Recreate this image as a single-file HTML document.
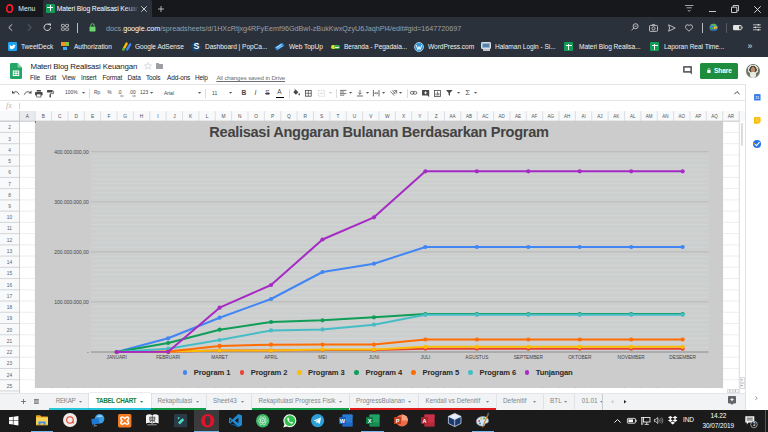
<!DOCTYPE html><html><head><meta charset="utf-8"><title>Materi Blog Realisasi Keuangan</title><style>
*{margin:0;padding:0;box-sizing:border-box}
html,body{width:768px;height:432px;overflow:hidden;background:#fff;font-family:"Liberation Sans",sans-serif}
.a{position:absolute}
.t{position:absolute;white-space:nowrap;line-height:1}
svg{position:absolute;overflow:visible}
</style></head><body>
<div class="a" style="left:0px;top:0px;width:768px;height:17px;background:#16181c;"></div>
<div class="a" style="left:0px;top:17px;width:768px;height:40px;background:#2a313a;"></div>
<div class="a" style="left:43px;top:0px;width:109px;height:17px;background:#2a313a;border-radius:1.5px 1.5px 0 0"></div>
<svg style="left:5.4px;top:4.1px" width="9.2" height="9.2" viewBox="0 0 18 18"><ellipse cx="9" cy="9" rx="5.6" ry="7.2" fill="none" stroke="#ff1b2d" stroke-width="3.2"/></svg>
<div class="t" style="left:18.3px;top:6.10px;font-size:6.8px;color:#e8e8e8;">Menu</div>
<div class="a" style="left:45.8px;top:3.9px;width:9px;height:9px;background:#0f9d58;border-radius:1px"></div>
<div class="a" style="left:47.3px;top:6.6px;width:6px;height:1.1px;background:#fff;"></div>
<div class="a" style="left:49.5px;top:5.2px;width:1.1px;height:6.2px;background:#fff;"></div>
<div class="t" style="left:56.8px;top:6.00px;font-size:6.8px;color:#fff;letter-spacing:-0.1px">Materi Blog Realisasi Keuar</div>
<div class="a" style="left:124px;top:3px;width:15px;height:12px;background:linear-gradient(90deg,rgba(42,49,58,0),rgba(42,49,58,0.95));"></div>
<svg style="left:141px;top:5.5px" width="6" height="6" viewBox="0 0 6 6"><path d="M0.3 0.3L5.7 5.7M5.7 0.3L0.3 5.7" stroke="#ddd" stroke-width="0.9"/></svg>
<svg style="left:158px;top:5.5px" width="6" height="6" viewBox="0 0 6 6"><path d="M3 0V6M0 3H6" stroke="#ddd" stroke-width="0.75"/></svg>
<svg style="left:685.2px;top:5px" width="8.4" height="7" viewBox="0 0 8.4 7"><path d="M0 0.5H8.4M1.6 2.8H6.8" stroke="#c8c8c8" stroke-width="0.8"/><path d="M2.8 5L4.2 6.4L5.6 5" stroke="#c8c8c8" stroke-width="0.8" fill="none"/></svg>
<div class="a" style="left:709.3px;top:11px;width:6.4px;height:0.8px;background:#c8c8c8;"></div>
<svg style="left:731px;top:5px" width="8" height="8" viewBox="0 0 8 8"><path d="M0.5 2.2H5.8V7.5H0.5Z M2.2 2.2V0.5H7.5V5.8H5.8" stroke="#ddd" stroke-width="0.9" fill="none"/></svg>
<svg style="left:753.5px;top:5.5px" width="7" height="7" viewBox="0 0 7 7"><path d="M0.3 0.3L6.7 6.7M6.7 0.3L0.3 6.7" stroke="#eee" stroke-width="0.9"/></svg>
<svg style="left:8px;top:23.5px" width="5" height="7" viewBox="0 0 5 7"><path d="M4.2 0.3L0.8 3.5L4.2 6.7" stroke="#ddd" stroke-width="0.9" fill="none"/></svg>
<svg style="left:26.5px;top:23.5px" width="5" height="7" viewBox="0 0 5 7"><path d="M0.8 0.3L4.2 3.5L0.8 6.7" stroke="#6a6f77" stroke-width="0.9" fill="none"/></svg>
<svg style="left:42.8px;top:23.2px" width="8.6" height="8.6" viewBox="0 0 8 8"><path d="M7 4A3 3 0 1 1 5.8 1.6" stroke="#ddd" stroke-width="0.9" fill="none"/><path d="M5 0.2L7.6 0.6L7 3Z" fill="#ddd"/></svg>
<svg style="left:61px;top:24px" width="8" height="7" viewBox="0 0 8 7"><g stroke="#ddd" stroke-width="0.7" fill="none"><rect x="0.4" y="0.4" width="3" height="2.4" rx="0.6"/><rect x="4.6" y="0.4" width="3" height="2.4" rx="0.6"/><rect x="0.4" y="4" width="3" height="2.4" rx="0.6"/><rect x="4.6" y="4" width="3" height="2.4" rx="0.6"/></g></svg>
<div class="a" style="left:77px;top:23px;width:0.8px;height:9.5px;background:#b8bcc2;"></div>
<svg style="left:88.5px;top:23px" width="7" height="9" viewBox="0 0 7 9"><path d="M1.8 4V2.4A1.7 1.7 0 0 1 5.2 2.4V4" stroke="#6fd66f" stroke-width="0.9" fill="none"/><rect x="0.5" y="3.8" width="6" height="4.6" rx="0.6" fill="#6fd66f"/></svg>
<div class="t" style="left:106px;top:24.7px;font-size:7.2px;color:#9aa0a8;letter-spacing:-0.01px">docs.<span style="color:#fff">google.com</span>/spreadsheets/d/1HXcRtjxg4RFyEemf96GdBwI-zBukKwxQzyU6JaqhPl4/edit#gid=1647720697</div>
<svg style="left:631px;top:23px" width="8" height="8" viewBox="0 0 8 8"><circle cx="4.6" cy="3.2" r="2.5" stroke="#ddd" stroke-width="0.8" fill="none"/><path d="M2.8 5L0.5 7.4M3.6 3.2H5.6" stroke="#ddd" stroke-width="0.8"/></svg>
<svg style="left:649px;top:23.5px" width="9" height="8" viewBox="0 0 9 8"><rect x="0.5" y="1.4" width="8" height="6" rx="1" stroke="#ddd" stroke-width="0.8" fill="none"/><circle cx="4.5" cy="4.4" r="1.6" stroke="#ddd" stroke-width="0.8" fill="none"/><path d="M3 1.4L3.6 0.4H5.4L6 1.4" stroke="#ddd" stroke-width="0.7" fill="none"/></svg>
<svg style="left:667.5px;top:23.5px" width="8" height="8" viewBox="0 0 8 8"><path d="M0.6 0.8L7.2 4L0.6 7.2L1.6 4Z" stroke="#ddd" stroke-width="0.8" fill="none" stroke-linejoin="round"/></svg>
<svg style="left:685px;top:23.5px" width="8" height="8" viewBox="0 0 8 8"><path d="M4 7.2C1.5 5.2 0.5 4 0.5 2.6A1.9 1.9 0 0 1 4 1.7A1.9 1.9 0 0 1 7.5 2.6C7.5 4 6.5 5.2 4 7.2Z" stroke="#ddd" stroke-width="0.8" fill="none"/></svg>
<div class="a" style="left:701.5px;top:23px;width:0.8px;height:9.5px;background:#b8bcc2;"></div>
<svg style="left:708.6px;top:23.4px" width="9" height="8.4" viewBox="0 0 9 8.4"><ellipse cx="4.6" cy="4.4" rx="4" ry="3.6" fill="#3a7bd5"/><path d="M1 3C2 1 4 0.4 6 1L7.6 2.4L5.4 3.2L3.6 2.6Z" fill="#58b947"/><path d="M5.2 3.6L8.4 3.4L8.2 5.4L6 6.6L4.6 5.4Z" fill="#f2c230"/><path d="M0.6 4.6L3 4.2L4.4 5.8L3.4 7.6C1.8 7.2 0.8 6 0.6 4.6Z" fill="#58b947"/><path d="M1.6 5.2L4.5 7.8L7.4 5.2" stroke="#1f4f9a" stroke-width="1" fill="none"/></svg>
<div class="a" style="left:725.5px;top:23px;width:0.8px;height:9.5px;background:#555b63;"></div>
<svg style="left:733px;top:25px" width="9.6" height="5.2" viewBox="0 0 9.6 5.2"><rect x="0" y="0" width="8.6" height="5.2" rx="1.3" fill="#e4e4e4"/><rect x="6.2" y="1" width="1.6" height="3.2" rx="0.5" fill="#2a313a"/><rect x="8.9" y="1.6" width="0.7" height="2" fill="#e4e4e4"/></svg>
<svg style="left:752.6px;top:24.3px" width="7.8" height="6.6" viewBox="0 0 7.8 6.6"><path d="M0 0.8H7.8M0 3.3H7.8M0 5.8H7.8" stroke="#ddd" stroke-width="0.75"/><circle cx="5.4" cy="0.8" r="0.9" fill="#ddd"/><circle cx="2.4" cy="3.3" r="0.9" fill="#ddd"/><circle cx="5.4" cy="5.8" r="0.9" fill="#ddd"/></svg>
<div class="a" style="left:7px;top:41.6px;width:9.4px;height:8.6px;margin:0.7px 0 0 0.6px;background:#1da1f2;border-radius:1px"></div><svg style="left:8.5px;top:43.6px" width="7" height="6" viewBox="0 0 7 6"><path d="M0.3 4.8C2.6 6 6 5 6 1.8L6.8 1L5.9 1.1A1.4 1.4 0 0 0 3.5 2.2C2.3 2.2 1.3 1.5 0.7 0.8C0.3 1.6 0.6 2.5 1.2 3L0.5 2.9C0.6 3.6 1.1 4.1 1.8 4.3C1.4 4.6 0.9 4.8 0.3 4.8Z" fill="#fff"/></svg>
<div class="t" style="left:21px;top:44.30px;font-size:6.6px;color:#f0f0f0;letter-spacing:-0.05px">TweetDeck</div>
<div class="a" style="left:61px;top:42.300000000000004px;width:3.6px;height:3.6px;background:#f7931e"></div><div class="a" style="left:65.4px;top:42.300000000000004px;width:3.6px;height:3.6px;background:#7ac943"></div><div class="a" style="left:63.2px;top:46.800000000000004px;width:3.6px;height:3.6px;background:#3fa9f5"></div>
<div class="t" style="left:74px;top:44.30px;font-size:6.6px;color:#f0f0f0;letter-spacing:-0.05px">Authorization</div>
<svg style="left:122px;top:42.1px" width="10" height="9" viewBox="0 0 10 9"><path d="M1.4 7.5L4.6 1.6" stroke="#fbbc04" stroke-width="2.4" stroke-linecap="round"/><path d="M5.2 7.5L8.2 2.4" stroke="#4285f4" stroke-width="2.4" stroke-linecap="round"/><circle cx="1.6" cy="7.3" r="1.4" fill="#34a853"/></svg>
<div class="t" style="left:135px;top:44.30px;font-size:6.6px;color:#f0f0f0;letter-spacing:-0.05px">Google AdSense</div>
<div class="a" style="left:191px;top:41.6px;width:10px;height:10px;background:#17406b;border-radius:5px"></div><div class="t" style="left:193.5px;top:42.2px;font-size:8.8px;font-weight:bold;color:#fff">S</div>
<div class="t" style="left:205px;top:44.30px;font-size:6.6px;color:#f0f0f0;letter-spacing:-0.05px">Dashboard | PopCa...</div>
<svg style="left:274px;top:42.1px" width="11" height="9" viewBox="0 0 11 9"><path d="M0.5 5.5L8 0.8L10.5 3.8L3 8.4Z" fill="#2b8be0"/><path d="M2.4 5.6L7.6 2.4" stroke="#fff" stroke-width="0.9"/><path d="M3.6 6.8L8.6 3.8" stroke="#bfe0ff" stroke-width="0.7"/></svg>
<div class="t" style="left:289px;top:44.30px;font-size:6.6px;color:#f0f0f0;letter-spacing:-0.05px">Web TopUp</div>
<div class="a" style="left:331px;top:44.1px;width:9.4px;height:4.4px;margin-top:0.6px;background:linear-gradient(90deg,#e6e21f 0 30%,#35b44a 45%);border-radius:2.2px"></div><div class="a" style="left:334.5px;top:46.5px;width:4px;height:1px;background:#e4f7e8"></div>
<div class="t" style="left:344px;top:44.30px;font-size:6.6px;color:#f0f0f0;letter-spacing:-0.05px">Beranda - Pegadaia...</div>
<svg style="left:414px;top:41.6px" width="10" height="10" viewBox="0 0 10 10"><circle cx="5" cy="5" r="4.5" fill="#2b93d6" stroke="#cfe8f7" stroke-width="0.7"/><path d="M2.3 3.2L3.9 7.6L5 4.6L6.1 7.6L7.7 3.2" stroke="#fff" stroke-width="1" fill="none"/></svg>
<div class="t" style="left:428px;top:44.30px;font-size:6.6px;color:#f0f0f0;letter-spacing:-0.05px">WordPress.com</div>
<div class="a" style="left:481px;top:42.1px;width:10px;height:7px;background:#8fb6d8;border:0.9px solid #d8dde2;border-radius:1px"></div><div class="a" style="left:482.5px;top:49.4px;width:7px;height:1.6px;background:#c0c4c9"></div><div class="a" style="left:483px;top:44.0px;width:6px;height:2.6px;background:#5a7fa3"></div>
<div class="t" style="left:495px;top:44.30px;font-size:6.6px;color:#f0f0f0;letter-spacing:-0.05px">Halaman Login - Si...</div>
<div class="a" style="left:564.2px;top:42.4px;width:8.8px;height:8.6px;background:#0f9d58;border-radius:0.8px"></div><div class="a" style="left:565.6px;top:45.2px;width:6px;height:1.1px;background:#fff"></div><div class="a" style="left:567.8px;top:43.800000000000004px;width:1.1px;height:6px;background:#fff"></div>
<div class="t" style="left:579px;top:44.30px;font-size:6.6px;color:#f0f0f0;letter-spacing:-0.05px">Materi Blog Realisa...</div>
<div class="a" style="left:650.2px;top:42.4px;width:8.8px;height:8.6px;background:#0f9d58;border-radius:0.8px"></div><div class="a" style="left:651.6px;top:45.2px;width:6px;height:1.1px;background:#fff"></div><div class="a" style="left:653.8px;top:43.800000000000004px;width:1.1px;height:6px;background:#fff"></div>
<div class="t" style="left:664px;top:44.30px;font-size:6.6px;color:#f0f0f0;letter-spacing:-0.05px">Laporan Real Time...</div>
<div class="t" style="left:747.5px;top:42.05px;font-size:8.5px;color:#e0e0e0;">»</div>
<!--CHROME-END-->
<div class="a" style="left:0px;top:57px;width:768px;height:27px;background:#fff;"></div>
<svg style="left:9.5px;top:63px" width="12" height="16" viewBox="0 0 12 16"><path d="M1.2 0H7.6L12 4.4V14.8A1.2 1.2 0 0 1 10.8 16H1.2A1.2 1.2 0 0 1 0 14.8V1.2A1.2 1.2 0 0 1 1.2 0Z" fill="#23a566"/><path d="M7.6 0L12 4.4H8.6A1 1 0 0 1 7.6 3.4Z" fill="#8ed1b1"/><path d="M2.8 7.6H9.2V13H2.8ZM3.8 8.6V9.8H5.5V8.6ZM6.5 8.6V9.8H8.2V8.6ZM3.8 10.8V12H5.5V10.8ZM6.5 10.8V12H8.2V10.8Z" fill="#fff" fill-rule="evenodd"/></svg>
<div class="t" style="left:30.5px;top:62.65px;font-size:7.9px;color:#222;letter-spacing:-0.19px">Materi Blog Realisasi Keuangan</div>
<svg style="left:143.5px;top:62px" width="8" height="8" viewBox="0 0 8 8"><path d="M4 0.6L5 3H7.6L5.5 4.6L6.3 7.2L4 5.6L1.7 7.2L2.5 4.6L0.4 3H3Z" stroke="#c4c7ca" stroke-width="0.6" fill="none"/></svg>
<svg style="left:156px;top:63px" width="7" height="6" viewBox="0 0 7 6"><path d="M0 0.6A0.6 0.6 0 0 1 0.6 0H2.6L3.4 0.9H6.4A0.6 0.6 0 0 1 7 1.5V5.4A0.6 0.6 0 0 1 6.4 6H0.6A0.6 0.6 0 0 1 0 5.4Z" fill="#9b9fa3"/></svg>
<div class="t" style="left:30px;top:74.55px;font-size:6.5px;color:#222;letter-spacing:-0.14px">File</div>
<div class="t" style="left:45.5px;top:74.55px;font-size:6.5px;color:#222;letter-spacing:-0.14px">Edit</div>
<div class="t" style="left:62px;top:74.55px;font-size:6.5px;color:#222;letter-spacing:-0.14px">View</div>
<div class="t" style="left:81px;top:74.55px;font-size:6.5px;color:#222;letter-spacing:-0.14px">Insert</div>
<div class="t" style="left:102.5px;top:74.55px;font-size:6.5px;color:#222;letter-spacing:-0.14px">Format</div>
<div class="t" style="left:127.5px;top:74.55px;font-size:6.5px;color:#222;letter-spacing:-0.14px">Data</div>
<div class="t" style="left:146px;top:74.55px;font-size:6.5px;color:#222;letter-spacing:-0.14px">Tools</div>
<div class="t" style="left:167px;top:74.55px;font-size:6.5px;color:#222;letter-spacing:-0.14px">Add-ons</div>
<div class="t" style="left:195px;top:74.55px;font-size:6.5px;color:#222;letter-spacing:-0.14px">Help</div>
<div class="t" style="left:216.4px;top:74.85px;font-size:6.1px;color:#6a6e73;text-decoration:underline;letter-spacing:-0.12px">All changes saved in Drive</div>
<svg style="left:683px;top:66px" width="9" height="9" viewBox="0 0 9 9"><path d="M0 0.8A0.8 0.8 0 0 1 0.8 0H8.2A0.8 0.8 0 0 1 9 0.8V8.6L7 6.8H0.8A0.8 0.8 0 0 1 0 6ZM1.7 1.7V5.1H7.3V1.7Z" fill="#5f6368" fill-rule="evenodd"/></svg>
<div class="a" style="left:700.3px;top:63.3px;width:37.4px;height:15.4px;background:#1e8e3e;border-radius:1.6px"></div>
<svg style="left:706.5px;top:68.2px" width="3.8" height="5.3" viewBox="0 0 5 7"><path d="M1.2 3V1.9A1.3 1.3 0 0 1 3.8 1.9V3" stroke="#fff" stroke-width="0.8" fill="none"/><rect x="0.3" y="2.8" width="4.4" height="3.8" rx="0.5" fill="#fff"/></svg>
<div class="t" style="left:714px;top:67.50px;font-size:6.6px;color:#fff;font-weight:bold;letter-spacing:-0.1px">Share</div>
<div class="a" style="left:745.8px;top:63.7px;width:14px;height:14px;border-radius:7px;background:radial-gradient(circle at 50% 40%,#b98a6a 0 2.4px,#5a4a3c 2.5px 3.6px,#d9dad6 3.7px 5px,#6d7a63 5.1px 7px)"></div>
<div class="a" style="left:749.5px;top:71.5px;width:6.6px;height:6px;border-radius:2px 2px 3px 3px;background:#e9e9e6"></div>
<div class="a" style="left:0px;top:83.6px;width:745px;height:0.8px;background:#e3e5e8;"></div>
<div class="a" style="left:0px;top:100px;width:745px;height:0.9px;background:#e3e5e8;"></div>
<div class="a" style="left:0px;top:110.6px;width:745px;height:0.8px;background:#dcdee1;"></div>
<svg style="left:12px;top:90px" width="7.5" height="6" viewBox="0 0 7.5 6"><path d="M1.6 2.6C3.4 1 6 1.6 7 4.6" stroke="#484848" stroke-width="0.95" fill="none"/><path d="M0 0.6V3.6H3Z" fill="#484848"/></svg>
<svg style="left:23.5px;top:90px" width="7.5" height="6" viewBox="0 0 7.5 6"><path d="M5.9 2.6C4.1 1 1.5 1.6 0.5 4.6" stroke="#484848" stroke-width="0.95" fill="none"/><path d="M7.5 0.6V3.6H4.5Z" fill="#484848"/></svg>
<svg style="left:34.8px;top:89.6px" width="7.6" height="7" viewBox="0 0 7.6 7"><rect x="1.7" y="0" width="4.2" height="1.6" fill="#484848"/><rect x="0" y="2" width="7.6" height="3.4" rx="0.7" fill="#484848"/><rect x="1.7" y="4" width="4.2" height="3" fill="#fff" stroke="#484848" stroke-width="0.7"/></svg>
<svg style="left:47.2px;top:89.5px" width="7" height="7.4" viewBox="0 0 7 7.4"><rect x="0" y="0" width="5.6" height="2.4" rx="0.4" fill="#484848"/><path d="M5.6 1.2H6.6V3.6H3.2V4.6" stroke="#484848" stroke-width="0.7" fill="none"/><rect x="2.5" y="4.4" width="1.5" height="3" fill="#484848"/></svg>
<div class="t" style="left:65px;top:90.95px;font-size:4.9px;color:#444;">100%</div>
<svg style="left:82.4px;top:92.4px" width="3.2" height="1.8" viewBox="0 0 3.2 1.8"><path d="M0 0H3.2L1.6 1.8Z" fill="#555"/></svg>
<div class="a" style="left:89.2px;top:88.5px;width:0.7px;height:9.5px;background:#dadce0;"></div>
<div class="t" style="left:94px;top:90.95px;font-size:4.9px;color:#444;">Rp</div>
<div class="t" style="left:107.2px;top:90.95px;font-size:4.9px;color:#444;">%</div>
<div class="t" style="left:117.5px;top:90.95px;font-size:4.9px;color:#444;">.0</div>
<svg style="left:119.5px;top:95.3px" width="4" height="2" viewBox="0 0 4 2"><path d="M4 1H0.8M1.6 0.1L0.6 1L1.6 1.9" stroke="#484848" stroke-width="0.5" fill="none"/></svg>
<div class="t" style="left:128.8px;top:90.95px;font-size:4.9px;color:#444;">.00</div>
<svg style="left:132px;top:95.3px" width="4" height="2" viewBox="0 0 4 2"><path d="M0 1H3.2M2.4 0.1L3.4 1L2.4 1.9" stroke="#484848" stroke-width="0.5" fill="none"/></svg>
<div class="t" style="left:140px;top:90.95px;font-size:4.9px;color:#444;">123</div>
<svg style="left:149.9px;top:92.4px" width="3.2" height="1.8" viewBox="0 0 3.2 1.8"><path d="M0 0H3.2L1.6 1.8Z" fill="#555"/></svg>
<div class="t" style="left:164px;top:90.90px;font-size:5.0px;color:#444;">Arial</div>
<svg style="left:197.9px;top:92.4px" width="3.2" height="1.8" viewBox="0 0 3.2 1.8"><path d="M0 0H3.2L1.6 1.8Z" fill="#555"/></svg>
<div class="a" style="left:204.7px;top:88.5px;width:0.7px;height:9.5px;background:#dadce0;"></div>
<div class="t" style="left:212px;top:90.90px;font-size:5.0px;color:#444;">11</div>
<svg style="left:229.4px;top:92.4px" width="3.2" height="1.8" viewBox="0 0 3.2 1.8"><path d="M0 0H3.2L1.6 1.8Z" fill="#555"/></svg>
<div class="t" style="left:241.5px;top:89.70px;font-size:6.6px;color:#444;font-weight:bold">B</div>
<div class="t" style="left:254.6px;top:89.60px;font-size:6.8px;color:#444;font-style:italic">I</div>
<div class="t" style="left:265.2px;top:89.70px;font-size:6.6px;color:#444;text-decoration:line-through">S</div>
<div class="t" style="left:277.3px;top:89.20px;font-size:6.4px;color:#444;">A</div>
<div class="a" style="left:275.5px;top:96.5px;width:8.5px;height:1.3px;background:#000;"></div>
<div class="a" style="left:288.7px;top:88.5px;width:0.7px;height:9.5px;background:#dadce0;"></div>
<svg style="left:292.8px;top:89.4px" width="7" height="7" viewBox="0 0 7 7"><path d="M2.6 0.4L5.4 3.2L2.9 5.7L0.3 3.2Z" fill="#484848"/><path d="M1.4 0L2.8 1.2" stroke="#484848" stroke-width="0.6"/><path d="M6.2 3.8C6.8 4.8 7 5.2 7 5.6A0.8 0.8 0 0 1 5.4 5.6C5.4 5.2 5.6 4.8 6.2 3.8Z" fill="#484848"/></svg>
<svg style="left:305.2px;top:89.7px" width="6.6" height="6.6" viewBox="0 0 6.6 6.6"><rect x="0.4" y="0.4" width="5.8" height="5.8" fill="none" stroke="#484848" stroke-width="0.8"/><path d="M3.3 0.4V6.2M0.4 3.3H6.2" stroke="#484848" stroke-width="0.7"/></svg>
<svg style="left:317.6px;top:89.7px" width="7" height="6.6" viewBox="0 0 7 6.6"><rect x="0.4" y="0.4" width="6.2" height="5.8" fill="none" stroke="#c6c9cc" stroke-width="0.8" stroke-dasharray="1.4 0.9"/><path d="M1.6 3.3H5.4" stroke="#c6c9cc" stroke-width="0.7"/></svg>
<svg style="left:329.4px;top:92.4px" width="3.2" height="1.8" viewBox="0 0 3.2 1.8"><path d="M0 0H3.2L1.6 1.8Z" fill="#c6c9cc"/></svg>
<div class="a" style="left:336.2px;top:88.5px;width:0.7px;height:9.5px;background:#dadce0;"></div>
<svg style="left:340px;top:90.2px" width="6.4" height="5.6" viewBox="0 0 6.4 5.6"><path d="M0 0.4H6.4M0 2H4.2M0 3.6H6.4M0 5.2H4.2" stroke="#484848" stroke-width="0.75"/></svg>
<svg style="left:349.4px;top:92.4px" width="3.2" height="1.8" viewBox="0 0 3.2 1.8"><path d="M0 0H3.2L1.6 1.8Z" fill="#555"/></svg>
<svg style="left:357px;top:89.8px" width="6" height="6.6" viewBox="0 0 6 6.6"><path d="M3 0V4.2M1.4 2.8L3 4.4L4.6 2.8" stroke="#484848" stroke-width="0.75" fill="none"/><path d="M0 6H6" stroke="#484848" stroke-width="0.8"/></svg>
<svg style="left:366.4px;top:92.4px" width="3.2" height="1.8" viewBox="0 0 3.2 1.8"><path d="M0 0H3.2L1.6 1.8Z" fill="#555"/></svg>
<svg style="left:373px;top:89.8px" width="6.4" height="6.4" viewBox="0 0 6.4 6.4"><path d="M0.4 0V6.4M6 0V6.4" stroke="#484848" stroke-width="0.8"/><path d="M1.6 3.2H4.8M2.6 2.2L1.6 3.2L2.6 4.2M3.8 2.2L4.8 3.2L3.8 4.2" stroke="#484848" stroke-width="0.6" fill="none"/></svg>
<svg style="left:382.4px;top:92.4px" width="3.2" height="1.8" viewBox="0 0 3.2 1.8"><path d="M0 0H3.2L1.6 1.8Z" fill="#555"/></svg>
<svg style="left:390px;top:89.8px" width="7" height="6.4" viewBox="0 0 7 6.4"><path d="M0.4 1.4L4.2 5.6M2.2 0.4L5.6 4.2" stroke="#484848" stroke-width="0.7"/><path d="M3.6 0.6H6.6V3.4" stroke="#484848" stroke-width="0.7" fill="none"/><path d="M6.6 0.6L3.6 3.8" stroke="#484848" stroke-width="0.7"/></svg>
<svg style="left:398.9px;top:92.4px" width="3.2" height="1.8" viewBox="0 0 3.2 1.8"><path d="M0 0H3.2L1.6 1.8Z" fill="#555"/></svg>
<div class="a" style="left:406.7px;top:88.5px;width:0.7px;height:9.5px;background:#dadce0;"></div>
<svg style="left:410px;top:91.2px" width="7.2" height="3.6" viewBox="0 0 7.2 3.6"><rect x="0.4" y="0.4" width="3.6" height="2.8" rx="1.4" fill="none" stroke="#484848" stroke-width="0.8"/><rect x="3.2" y="0.4" width="3.6" height="2.8" rx="1.4" fill="none" stroke="#484848" stroke-width="0.8"/></svg>
<svg style="left:422px;top:89.6px" width="7.2" height="7.2" viewBox="0 0 7.2 7.2"><path d="M0 0.6A0.6 0.6 0 0 1 0.6 0H6.6A0.6 0.6 0 0 1 7.2 0.6V7.2L5.6 5.6H0.6A0.6 0.6 0 0 1 0 5Z" fill="#484848"/><path d="M3.6 1.2V4.4M2 2.8H5.2" stroke="#fff" stroke-width="0.8"/></svg>
<svg style="left:433.6px;top:89.6px" width="6.8" height="6.8" viewBox="0 0 6.8 6.8"><rect x="0.4" y="0.4" width="6" height="6" fill="none" stroke="#484848" stroke-width="0.8"/><path d="M2 5.4V3.6M3.4 5.4V1.6M4.8 5.4V3" stroke="#484848" stroke-width="0.8"/></svg>
<svg style="left:446.2px;top:90.2px" width="6.6" height="5.8" viewBox="0 0 6.6 5.8"><path d="M0 0H6.6L4 3V5.8L2.6 5V3Z" fill="#484848"/></svg>
<svg style="left:457.4px;top:92.4px" width="3.2" height="1.8" viewBox="0 0 3.2 1.8"><path d="M0 0H3.2L1.6 1.8Z" fill="#555"/></svg>
<div class="t" style="left:465.2px;top:88.80px;font-size:8px;color:#555;">Σ</div>
<svg style="left:473.9px;top:92.4px" width="3.2" height="1.8" viewBox="0 0 3.2 1.8"><path d="M0 0H3.2L1.6 1.8Z" fill="#555"/></svg>
<svg style="left:733.6px;top:91.4px" width="6" height="3.6" viewBox="0 0 6 3.6"><path d="M0.4 3.2L3 0.6L5.6 3.2" stroke="#444" stroke-width="1" fill="none"/></svg>
<div class="t" style="left:6px;top:101.9px;font-size:8px;color:#b5b8bc;font-style:italic;font-family:'Liberation Serif',serif">fx</div>
<div class="a" style="left:19.3px;top:102.5px;width:0.7px;height:6px;background:#d5d7da;"></div>
<!--TOOLBAR-END-->
<div class="a" style="left:0px;top:111.2px;width:739px;height:10px;background:#f8f9fa;"></div>
<div class="a" style="left:0px;top:121.2px;width:19.5px;height:272.1px;background:#f8f9fa;"></div>
<div class="a" style="left:19.5px;top:111.2px;width:15.700000000000003px;height:10px;background:#e8eaed;"></div>
<div class="t" style="left:27.35px;top:115.00px;font-size:4.8px;color:#4f5358;transform:translateX(-50%);">A</div>
<div class="t" style="left:43.385000000000005px;top:115.00px;font-size:4.8px;color:#4f5358;transform:translateX(-50%);">B</div>
<div class="t" style="left:59.755px;top:115.00px;font-size:4.8px;color:#4f5358;transform:translateX(-50%);">C</div>
<div class="t" style="left:76.125px;top:115.00px;font-size:4.8px;color:#4f5358;transform:translateX(-50%);">D</div>
<div class="t" style="left:92.495px;top:115.00px;font-size:4.8px;color:#4f5358;transform:translateX(-50%);">E</div>
<div class="t" style="left:108.86500000000001px;top:115.00px;font-size:4.8px;color:#4f5358;transform:translateX(-50%);">F</div>
<div class="t" style="left:125.23500000000001px;top:115.00px;font-size:4.8px;color:#4f5358;transform:translateX(-50%);">G</div>
<div class="t" style="left:141.60500000000002px;top:115.00px;font-size:4.8px;color:#4f5358;transform:translateX(-50%);">H</div>
<div class="t" style="left:157.97500000000002px;top:115.00px;font-size:4.8px;color:#4f5358;transform:translateX(-50%);">I</div>
<div class="t" style="left:174.34500000000003px;top:115.00px;font-size:4.8px;color:#4f5358;transform:translateX(-50%);">J</div>
<div class="t" style="left:190.71500000000003px;top:115.00px;font-size:4.8px;color:#4f5358;transform:translateX(-50%);">K</div>
<div class="t" style="left:207.08500000000004px;top:115.00px;font-size:4.8px;color:#4f5358;transform:translateX(-50%);">L</div>
<div class="t" style="left:223.455px;top:115.00px;font-size:4.8px;color:#4f5358;transform:translateX(-50%);">M</div>
<div class="t" style="left:239.825px;top:115.00px;font-size:4.8px;color:#4f5358;transform:translateX(-50%);">N</div>
<div class="t" style="left:256.195px;top:115.00px;font-size:4.8px;color:#4f5358;transform:translateX(-50%);">O</div>
<div class="t" style="left:272.565px;top:115.00px;font-size:4.8px;color:#4f5358;transform:translateX(-50%);">P</div>
<div class="t" style="left:288.935px;top:115.00px;font-size:4.8px;color:#4f5358;transform:translateX(-50%);">Q</div>
<div class="t" style="left:305.305px;top:115.00px;font-size:4.8px;color:#4f5358;transform:translateX(-50%);">R</div>
<div class="t" style="left:321.675px;top:115.00px;font-size:4.8px;color:#4f5358;transform:translateX(-50%);">S</div>
<div class="t" style="left:338.045px;top:115.00px;font-size:4.8px;color:#4f5358;transform:translateX(-50%);">T</div>
<div class="t" style="left:354.415px;top:115.00px;font-size:4.8px;color:#4f5358;transform:translateX(-50%);">U</div>
<div class="t" style="left:370.785px;top:115.00px;font-size:4.8px;color:#4f5358;transform:translateX(-50%);">V</div>
<div class="t" style="left:387.15500000000003px;top:115.00px;font-size:4.8px;color:#4f5358;transform:translateX(-50%);">W</div>
<div class="t" style="left:403.52500000000003px;top:115.00px;font-size:4.8px;color:#4f5358;transform:translateX(-50%);">X</div>
<div class="t" style="left:419.895px;top:115.00px;font-size:4.8px;color:#4f5358;transform:translateX(-50%);">Y</div>
<div class="t" style="left:436.265px;top:115.00px;font-size:4.8px;color:#4f5358;transform:translateX(-50%);">Z</div>
<div class="t" style="left:452.635px;top:115.15px;font-size:4.5px;color:#4f5358;transform:translateX(-50%);">AA</div>
<div class="t" style="left:469.005px;top:115.15px;font-size:4.5px;color:#4f5358;transform:translateX(-50%);">AB</div>
<div class="t" style="left:485.375px;top:115.15px;font-size:4.5px;color:#4f5358;transform:translateX(-50%);">AC</div>
<div class="t" style="left:501.745px;top:115.15px;font-size:4.5px;color:#4f5358;transform:translateX(-50%);">AD</div>
<div class="t" style="left:518.115px;top:115.15px;font-size:4.5px;color:#4f5358;transform:translateX(-50%);">AE</div>
<div class="t" style="left:534.4850000000001px;top:115.15px;font-size:4.5px;color:#4f5358;transform:translateX(-50%);">AF</div>
<div class="t" style="left:550.855px;top:115.15px;font-size:4.5px;color:#4f5358;transform:translateX(-50%);">AG</div>
<div class="t" style="left:567.2250000000001px;top:115.15px;font-size:4.5px;color:#4f5358;transform:translateX(-50%);">AH</div>
<div class="t" style="left:583.595px;top:115.15px;font-size:4.5px;color:#4f5358;transform:translateX(-50%);">AI</div>
<div class="t" style="left:599.9650000000001px;top:115.15px;font-size:4.5px;color:#4f5358;transform:translateX(-50%);">AJ</div>
<div class="t" style="left:616.335px;top:115.15px;font-size:4.5px;color:#4f5358;transform:translateX(-50%);">AK</div>
<div class="t" style="left:632.7050000000002px;top:115.15px;font-size:4.5px;color:#4f5358;transform:translateX(-50%);">AL</div>
<div class="t" style="left:649.075px;top:115.15px;font-size:4.5px;color:#4f5358;transform:translateX(-50%);">AM</div>
<div class="t" style="left:665.4450000000002px;top:115.15px;font-size:4.5px;color:#4f5358;transform:translateX(-50%);">AN</div>
<div class="t" style="left:681.815px;top:115.15px;font-size:4.5px;color:#4f5358;transform:translateX(-50%);">AO</div>
<div class="t" style="left:698.1850000000002px;top:115.15px;font-size:4.5px;color:#4f5358;transform:translateX(-50%);">AP</div>
<div class="t" style="left:714.5550000000001px;top:115.15px;font-size:4.5px;color:#4f5358;transform:translateX(-50%);">AQ</div>
<div class="t" style="left:730.9250000000002px;top:115.15px;font-size:4.5px;color:#4f5358;transform:translateX(-50%);">AR</div>
<svg style="left:0;top:0" width="768" height="432" viewBox="0 0 768 432"><path d="M19.50 111.2V121.2M35.20 111.2V121.2M51.57 111.2V121.2M67.94 111.2V121.2M84.31 111.2V121.2M100.68 111.2V121.2M117.05 111.2V121.2M133.42 111.2V121.2M149.79 111.2V121.2M166.16 111.2V121.2M182.53 111.2V121.2M198.90 111.2V121.2M215.27 111.2V121.2M231.64 111.2V121.2M248.01 111.2V121.2M264.38 111.2V121.2M280.75 111.2V121.2M297.12 111.2V121.2M313.49 111.2V121.2M329.86 111.2V121.2M346.23 111.2V121.2M362.60 111.2V121.2M378.97 111.2V121.2M395.34 111.2V121.2M411.71 111.2V121.2M428.08 111.2V121.2M444.45 111.2V121.2M460.82 111.2V121.2M477.19 111.2V121.2M493.56 111.2V121.2M509.93 111.2V121.2M526.30 111.2V121.2M542.67 111.2V121.2M559.04 111.2V121.2M575.41 111.2V121.2M591.78 111.2V121.2M608.15 111.2V121.2M624.52 111.2V121.2M640.89 111.2V121.2M657.26 111.2V121.2M673.63 111.2V121.2M690.00 111.2V121.2M706.37 111.2V121.2M722.74 111.2V121.2M739.11 111.2V121.2" stroke="#c9ccd0" stroke-width="0.6" fill="none"/><path d="M35.20 121.2V393.3M51.57 121.2V393.3M67.94 121.2V393.3M84.31 121.2V393.3M100.68 121.2V393.3M117.05 121.2V393.3M133.42 121.2V393.3M149.79 121.2V393.3M166.16 121.2V393.3M182.53 121.2V393.3M198.90 121.2V393.3M215.27 121.2V393.3M231.64 121.2V393.3M248.01 121.2V393.3M264.38 121.2V393.3M280.75 121.2V393.3M297.12 121.2V393.3M313.49 121.2V393.3M329.86 121.2V393.3M346.23 121.2V393.3M362.60 121.2V393.3M378.97 121.2V393.3M395.34 121.2V393.3M411.71 121.2V393.3M428.08 121.2V393.3M444.45 121.2V393.3M460.82 121.2V393.3M477.19 121.2V393.3M493.56 121.2V393.3M509.93 121.2V393.3M526.30 121.2V393.3M542.67 121.2V393.3M559.04 121.2V393.3M575.41 121.2V393.3M591.78 121.2V393.3M608.15 121.2V393.3M624.52 121.2V393.3M640.89 121.2V393.3M657.26 121.2V393.3M673.63 121.2V393.3M690.00 121.2V393.3M706.37 121.2V393.3M722.74 121.2V393.3M739.11 121.2V393.3" stroke="#e2e3e5" stroke-width="0.6" fill="none"/><path d="M19.5 121.20H739M19.5 132.44H739M19.5 143.68H739M19.5 154.92H739M19.5 166.16H739M19.5 177.40H739M19.5 188.64H739M19.5 199.88H739M19.5 211.12H739M19.5 222.36H739M19.5 233.60H739M19.5 244.84H739M19.5 256.08H739M19.5 267.32H739M19.5 278.56H739M19.5 289.80H739M19.5 301.04H739M19.5 312.28H739M19.5 323.52H739M19.5 334.76H739M19.5 346.00H739M19.5 357.24H739M19.5 368.48H739M19.5 379.72H739M19.5 390.96H739" stroke="#e2e3e5" stroke-width="0.6" fill="none"/><path d="M0 121.20H19.5M0 132.44H19.5M0 143.68H19.5M0 154.92H19.5M0 166.16H19.5M0 177.40H19.5M0 188.64H19.5M0 199.88H19.5M0 211.12H19.5M0 222.36H19.5M0 233.60H19.5M0 244.84H19.5M0 256.08H19.5M0 267.32H19.5M0 278.56H19.5M0 289.80H19.5M0 301.04H19.5M0 312.28H19.5M0 323.52H19.5M0 334.76H19.5M0 346.00H19.5M0 357.24H19.5M0 368.48H19.5M0 379.72H19.5M0 390.96H19.5" stroke="#c3c6c9" stroke-width="0.7" fill="none"/><path d="M19.5 111.2V393.3M0 121.2H739" stroke="#bfc2c6" stroke-width="0.8" fill="none"/></svg>
<div class="t" style="left:9.5px;top:126.32px;font-size:4.8px;color:#5a5e63;transform:translateX(-50%);">2</div>
<div class="t" style="left:9.5px;top:137.56px;font-size:4.8px;color:#5a5e63;transform:translateX(-50%);">3</div>
<div class="t" style="left:9.5px;top:148.80px;font-size:4.8px;color:#5a5e63;transform:translateX(-50%);">4</div>
<div class="t" style="left:9.5px;top:160.04px;font-size:4.8px;color:#5a5e63;transform:translateX(-50%);">5</div>
<div class="t" style="left:9.5px;top:171.28px;font-size:4.8px;color:#5a5e63;transform:translateX(-50%);">6</div>
<div class="t" style="left:9.5px;top:182.52px;font-size:4.8px;color:#5a5e63;transform:translateX(-50%);">7</div>
<div class="t" style="left:9.5px;top:193.76px;font-size:4.8px;color:#5a5e63;transform:translateX(-50%);">8</div>
<div class="t" style="left:9.5px;top:205.00px;font-size:4.8px;color:#5a5e63;transform:translateX(-50%);">9</div>
<div class="t" style="left:9.5px;top:216.24px;font-size:4.8px;color:#5a5e63;transform:translateX(-50%);">10</div>
<div class="t" style="left:9.5px;top:227.48px;font-size:4.8px;color:#5a5e63;transform:translateX(-50%);">11</div>
<div class="t" style="left:9.5px;top:238.72px;font-size:4.8px;color:#5a5e63;transform:translateX(-50%);">12</div>
<div class="t" style="left:9.5px;top:249.96px;font-size:4.8px;color:#5a5e63;transform:translateX(-50%);">13</div>
<div class="t" style="left:9.5px;top:261.20px;font-size:4.8px;color:#5a5e63;transform:translateX(-50%);">14</div>
<div class="t" style="left:9.5px;top:272.44px;font-size:4.8px;color:#5a5e63;transform:translateX(-50%);">15</div>
<div class="t" style="left:9.5px;top:283.68px;font-size:4.8px;color:#5a5e63;transform:translateX(-50%);">16</div>
<div class="t" style="left:9.5px;top:294.92px;font-size:4.8px;color:#5a5e63;transform:translateX(-50%);">17</div>
<div class="t" style="left:9.5px;top:306.16px;font-size:4.8px;color:#5a5e63;transform:translateX(-50%);">18</div>
<div class="t" style="left:9.5px;top:317.40px;font-size:4.8px;color:#5a5e63;transform:translateX(-50%);">19</div>
<div class="t" style="left:9.5px;top:328.64px;font-size:4.8px;color:#5a5e63;transform:translateX(-50%);">20</div>
<div class="t" style="left:9.5px;top:339.88px;font-size:4.8px;color:#5a5e63;transform:translateX(-50%);">21</div>
<div class="t" style="left:9.5px;top:351.12px;font-size:4.8px;color:#5a5e63;transform:translateX(-50%);">22</div>
<div class="t" style="left:9.5px;top:362.36px;font-size:4.8px;color:#5a5e63;transform:translateX(-50%);">23</div>
<div class="t" style="left:9.5px;top:373.60px;font-size:4.8px;color:#5a5e63;transform:translateX(-50%);">24</div>
<div class="t" style="left:9.5px;top:384.84px;font-size:4.8px;color:#5a5e63;transform:translateX(-50%);">25</div>
<!--GRID-END-->
<div class="a" style="left:35.3px;top:121.2px;width:687.3000000000001px;height:266.8px;background:#cccccc;"></div>
<div class="t" style="left:379px;top:124.60px;font-size:14.6px;color:#434343;transform:translateX(-50%);font-weight:bold;letter-spacing:-0.3px">Realisasi Anggaran Bulanan Berdasarkan Program</div>
<svg style="left:0;top:0" width="768" height="432" viewBox="0 0 768 432"><rect x="91" y="151.68" width="617.5" height="200.32" fill="#cdcfcf"/><path d="M91 347.45H708.5M91 342.89H708.5M91 338.34H708.5M91 333.79H708.5M91 329.24H708.5M91 324.68H708.5M91 320.13H708.5M91 315.58H708.5M91 311.03H708.5M91 306.47H708.5M91 297.37H708.5M91 292.81H708.5M91 288.26H708.5M91 283.71H708.5M91 279.16H708.5M91 274.60H708.5M91 270.05H708.5M91 265.50H708.5M91 260.95H708.5M91 256.39H708.5M91 247.29H708.5M91 242.73H708.5M91 238.18H708.5M91 233.63H708.5M91 229.08H708.5M91 224.52H708.5M91 219.97H708.5M91 215.42H708.5M91 210.87H708.5M91 206.31H708.5M91 197.21H708.5M91 192.65H708.5M91 188.10H708.5M91 183.55H708.5M91 179.00H708.5M91 174.44H708.5M91 169.89H708.5M91 165.34H708.5M91 160.79H708.5M91 156.23H708.5" stroke="#d3d7d7" stroke-width="0.8" fill="none"/><path d="M91 301.92H708.5M91 251.84H708.5M91 201.76H708.5M91 151.68H708.5" stroke="#bcbcbc" stroke-width="1.2" fill="none"/><path d="M91 352.0H708.5" stroke="#8a8a8a" stroke-width="1" fill="none"/><polyline points="116.70,352.00 168.15,338.30 219.60,317.70 271.05,299.00 322.50,272.00 373.95,263.70 425.40,247.00 476.85,247.00 528.30,247.00 579.75,247.00 631.20,247.00 682.65,247.00" stroke="#4285f4" stroke-width="2" fill="none" stroke-linejoin="round" stroke-linecap="round"/><circle cx="116.70" cy="352.00" r="2.1" fill="#4285f4"/><circle cx="168.15" cy="338.30" r="2.1" fill="#4285f4"/><circle cx="219.60" cy="317.70" r="2.1" fill="#4285f4"/><circle cx="271.05" cy="299.00" r="2.1" fill="#4285f4"/><circle cx="322.50" cy="272.00" r="2.1" fill="#4285f4"/><circle cx="373.95" cy="263.70" r="2.1" fill="#4285f4"/><circle cx="425.40" cy="247.00" r="2.1" fill="#4285f4"/><circle cx="476.85" cy="247.00" r="2.1" fill="#4285f4"/><circle cx="528.30" cy="247.00" r="2.1" fill="#4285f4"/><circle cx="579.75" cy="247.00" r="2.1" fill="#4285f4"/><circle cx="631.20" cy="247.00" r="2.1" fill="#4285f4"/><circle cx="682.65" cy="247.00" r="2.1" fill="#4285f4"/><polyline points="116.70,352.00 168.15,351.70 219.60,350.60 271.05,350.60 322.50,350.00 373.95,349.90 425.40,348.70 476.85,348.70 528.30,348.70 579.75,348.70 631.20,348.70 682.65,348.70" stroke="#ea4335" stroke-width="2" fill="none" stroke-linejoin="round" stroke-linecap="round"/><circle cx="116.70" cy="352.00" r="2.1" fill="#ea4335"/><circle cx="168.15" cy="351.70" r="2.1" fill="#ea4335"/><circle cx="219.60" cy="350.60" r="2.1" fill="#ea4335"/><circle cx="271.05" cy="350.60" r="2.1" fill="#ea4335"/><circle cx="322.50" cy="350.00" r="2.1" fill="#ea4335"/><circle cx="373.95" cy="349.90" r="2.1" fill="#ea4335"/><circle cx="425.40" cy="348.70" r="2.1" fill="#ea4335"/><circle cx="476.85" cy="348.70" r="2.1" fill="#ea4335"/><circle cx="528.30" cy="348.70" r="2.1" fill="#ea4335"/><circle cx="579.75" cy="348.70" r="2.1" fill="#ea4335"/><circle cx="631.20" cy="348.70" r="2.1" fill="#ea4335"/><circle cx="682.65" cy="348.70" r="2.1" fill="#ea4335"/><polyline points="116.70,352.00 168.15,351.50 219.60,350.50 271.05,350.50 322.50,349.60 373.95,349.50 425.40,346.80 476.85,346.80 528.30,346.80 579.75,346.80 631.20,346.80 682.65,346.80" stroke="#fbbc04" stroke-width="2" fill="none" stroke-linejoin="round" stroke-linecap="round"/><circle cx="116.70" cy="352.00" r="2.1" fill="#fbbc04"/><circle cx="168.15" cy="351.50" r="2.1" fill="#fbbc04"/><circle cx="219.60" cy="350.50" r="2.1" fill="#fbbc04"/><circle cx="271.05" cy="350.50" r="2.1" fill="#fbbc04"/><circle cx="322.50" cy="349.60" r="2.1" fill="#fbbc04"/><circle cx="373.95" cy="349.50" r="2.1" fill="#fbbc04"/><circle cx="425.40" cy="346.80" r="2.1" fill="#fbbc04"/><circle cx="476.85" cy="346.80" r="2.1" fill="#fbbc04"/><circle cx="528.30" cy="346.80" r="2.1" fill="#fbbc04"/><circle cx="579.75" cy="346.80" r="2.1" fill="#fbbc04"/><circle cx="631.20" cy="346.80" r="2.1" fill="#fbbc04"/><circle cx="682.65" cy="346.80" r="2.1" fill="#fbbc04"/><polyline points="116.70,352.00 168.15,343.00 219.60,329.70 271.05,322.00 322.50,320.30 373.95,317.30 425.40,314.00 476.85,314.00 528.30,314.00 579.75,314.00 631.20,314.00 682.65,314.00" stroke="#0f9d58" stroke-width="2" fill="none" stroke-linejoin="round" stroke-linecap="round"/><circle cx="116.70" cy="352.00" r="2.1" fill="#0f9d58"/><circle cx="168.15" cy="343.00" r="2.1" fill="#0f9d58"/><circle cx="219.60" cy="329.70" r="2.1" fill="#0f9d58"/><circle cx="271.05" cy="322.00" r="2.1" fill="#0f9d58"/><circle cx="322.50" cy="320.30" r="2.1" fill="#0f9d58"/><circle cx="373.95" cy="317.30" r="2.1" fill="#0f9d58"/><circle cx="425.40" cy="314.00" r="2.1" fill="#0f9d58"/><circle cx="476.85" cy="314.00" r="2.1" fill="#0f9d58"/><circle cx="528.30" cy="314.00" r="2.1" fill="#0f9d58"/><circle cx="579.75" cy="314.00" r="2.1" fill="#0f9d58"/><circle cx="631.20" cy="314.00" r="2.1" fill="#0f9d58"/><circle cx="682.65" cy="314.00" r="2.1" fill="#0f9d58"/><polyline points="116.70,352.00 168.15,351.60 219.60,345.90 271.05,344.70 322.50,344.60 373.95,344.60 425.40,339.50 476.85,339.50 528.30,339.50 579.75,339.50 631.20,339.50 682.65,339.50" stroke="#ff6d01" stroke-width="2" fill="none" stroke-linejoin="round" stroke-linecap="round"/><circle cx="116.70" cy="352.00" r="2.1" fill="#ff6d01"/><circle cx="168.15" cy="351.60" r="2.1" fill="#ff6d01"/><circle cx="219.60" cy="345.90" r="2.1" fill="#ff6d01"/><circle cx="271.05" cy="344.70" r="2.1" fill="#ff6d01"/><circle cx="322.50" cy="344.60" r="2.1" fill="#ff6d01"/><circle cx="373.95" cy="344.60" r="2.1" fill="#ff6d01"/><circle cx="425.40" cy="339.50" r="2.1" fill="#ff6d01"/><circle cx="476.85" cy="339.50" r="2.1" fill="#ff6d01"/><circle cx="528.30" cy="339.50" r="2.1" fill="#ff6d01"/><circle cx="579.75" cy="339.50" r="2.1" fill="#ff6d01"/><circle cx="631.20" cy="339.50" r="2.1" fill="#ff6d01"/><circle cx="682.65" cy="339.50" r="2.1" fill="#ff6d01"/><polyline points="116.70,352.00 168.15,348.70 219.60,340.00 271.05,330.40 322.50,329.40 373.95,324.70 425.40,314.80 476.85,314.80 528.30,314.80 579.75,314.80 631.20,314.80 682.65,314.80" stroke="#46bdc6" stroke-width="2" fill="none" stroke-linejoin="round" stroke-linecap="round"/><circle cx="116.70" cy="352.00" r="2.1" fill="#46bdc6"/><circle cx="168.15" cy="348.70" r="2.1" fill="#46bdc6"/><circle cx="219.60" cy="340.00" r="2.1" fill="#46bdc6"/><circle cx="271.05" cy="330.40" r="2.1" fill="#46bdc6"/><circle cx="322.50" cy="329.40" r="2.1" fill="#46bdc6"/><circle cx="373.95" cy="324.70" r="2.1" fill="#46bdc6"/><circle cx="425.40" cy="314.80" r="2.1" fill="#46bdc6"/><circle cx="476.85" cy="314.80" r="2.1" fill="#46bdc6"/><circle cx="528.30" cy="314.80" r="2.1" fill="#46bdc6"/><circle cx="579.75" cy="314.80" r="2.1" fill="#46bdc6"/><circle cx="631.20" cy="314.80" r="2.1" fill="#46bdc6"/><circle cx="682.65" cy="314.80" r="2.1" fill="#46bdc6"/><polyline points="116.70,352.00 168.15,351.80 219.60,307.70 271.05,285.00 322.50,239.50 373.95,217.30 425.40,171.30 476.85,171.30 528.30,171.30 579.75,171.30 631.20,171.30 682.65,171.30" stroke="#a52bc4" stroke-width="2" fill="none" stroke-linejoin="round" stroke-linecap="round"/><circle cx="116.70" cy="352.00" r="2.1" fill="#a52bc4"/><circle cx="168.15" cy="351.80" r="2.1" fill="#a52bc4"/><circle cx="219.60" cy="307.70" r="2.1" fill="#a52bc4"/><circle cx="271.05" cy="285.00" r="2.1" fill="#a52bc4"/><circle cx="322.50" cy="239.50" r="2.1" fill="#a52bc4"/><circle cx="373.95" cy="217.30" r="2.1" fill="#a52bc4"/><circle cx="425.40" cy="171.30" r="2.1" fill="#a52bc4"/><circle cx="476.85" cy="171.30" r="2.1" fill="#a52bc4"/><circle cx="528.30" cy="171.30" r="2.1" fill="#a52bc4"/><circle cx="579.75" cy="171.30" r="2.1" fill="#a52bc4"/><circle cx="631.20" cy="171.30" r="2.1" fill="#a52bc4"/><circle cx="682.65" cy="171.30" r="2.1" fill="#a52bc4"/></svg>
<div class="t" style="left:88.7px;top:350.82px;font-size:4.95px;color:#444;transform:translateX(-100%);">-</div>
<div class="t" style="left:88.7px;top:300.75px;font-size:4.95px;color:#444;transform:translateX(-100%);">100.000.000,00</div>
<div class="t" style="left:88.7px;top:250.67px;font-size:4.95px;color:#444;transform:translateX(-100%);">200.000.000,00</div>
<div class="t" style="left:88.7px;top:200.59px;font-size:4.95px;color:#444;transform:translateX(-100%);">300.000.000,00</div>
<div class="t" style="left:88.7px;top:150.51px;font-size:4.95px;color:#444;transform:translateX(-100%);">400.000.000,00</div>
<div class="t" style="left:116.7px;top:355.73px;font-size:4.75px;color:#444;transform:translateX(-50%);">JANUARI</div>
<div class="t" style="left:168.15px;top:355.73px;font-size:4.75px;color:#444;transform:translateX(-50%);">FEBRUARI</div>
<div class="t" style="left:219.60000000000002px;top:355.73px;font-size:4.75px;color:#444;transform:translateX(-50%);">MARET</div>
<div class="t" style="left:271.05px;top:355.73px;font-size:4.75px;color:#444;transform:translateX(-50%);">APRIL</div>
<div class="t" style="left:322.5px;top:355.73px;font-size:4.75px;color:#444;transform:translateX(-50%);">MEI</div>
<div class="t" style="left:373.95px;top:355.73px;font-size:4.75px;color:#444;transform:translateX(-50%);">JUNI</div>
<div class="t" style="left:425.40000000000003px;top:355.73px;font-size:4.75px;color:#444;transform:translateX(-50%);">JULI</div>
<div class="t" style="left:476.85px;top:355.73px;font-size:4.75px;color:#444;transform:translateX(-50%);">AGUSTUS</div>
<div class="t" style="left:528.3000000000001px;top:355.73px;font-size:4.75px;color:#444;transform:translateX(-50%);">SEPTEMBER</div>
<div class="t" style="left:579.75px;top:355.73px;font-size:4.75px;color:#444;transform:translateX(-50%);">OKTOBER</div>
<div class="t" style="left:631.2px;top:355.73px;font-size:4.75px;color:#444;transform:translateX(-50%);">NOVEMBER</div>
<div class="t" style="left:682.6500000000001px;top:355.73px;font-size:4.75px;color:#444;transform:translateX(-50%);">DESEMBER</div>
<div class="a" style="left:182.7px;top:370.3px;width:4.6px;height:4.6px;background:#4285f4;border-radius:2.3px"></div>
<div class="t" style="left:193.8px;top:368.80px;font-size:7.6px;color:#2a2a2a;font-weight:bold;letter-spacing:-0.12px">Program 1</div>
<div class="a" style="left:239.7px;top:370.3px;width:4.6px;height:4.6px;background:#ea4335;border-radius:2.3px"></div>
<div class="t" style="left:250.8px;top:368.80px;font-size:7.6px;color:#2a2a2a;font-weight:bold;letter-spacing:-0.12px">Program 2</div>
<div class="a" style="left:297.0px;top:370.3px;width:4.6px;height:4.6px;background:#fbbc04;border-radius:2.3px"></div>
<div class="t" style="left:308.1px;top:368.80px;font-size:7.6px;color:#2a2a2a;font-weight:bold;letter-spacing:-0.12px">Program 3</div>
<div class="a" style="left:354.4px;top:370.3px;width:4.6px;height:4.6px;background:#0f9d58;border-radius:2.3px"></div>
<div class="t" style="left:365.5px;top:368.80px;font-size:7.6px;color:#2a2a2a;font-weight:bold;letter-spacing:-0.12px">Program 4</div>
<div class="a" style="left:411.4px;top:370.3px;width:4.6px;height:4.6px;background:#ff6d01;border-radius:2.3px"></div>
<div class="t" style="left:422.5px;top:368.80px;font-size:7.6px;color:#2a2a2a;font-weight:bold;letter-spacing:-0.12px">Program 5</div>
<div class="a" style="left:468.4px;top:370.3px;width:4.6px;height:4.6px;background:#46bdc6;border-radius:2.3px"></div>
<div class="t" style="left:479.5px;top:368.80px;font-size:7.6px;color:#2a2a2a;font-weight:bold;letter-spacing:-0.12px">Program 6</div>
<div class="a" style="left:524.7px;top:370.3px;width:4.6px;height:4.6px;background:#a52bc4;border-radius:2.3px"></div>
<div class="t" style="left:535.8px;top:368.80px;font-size:7.6px;color:#2a2a2a;font-weight:bold;letter-spacing:-0.12px">Tunjangan</div>
<div class="a" style="left:34.9px;top:121px;width:1.1px;height:1.6px;background:#4a7fe0;"></div>
<!--CHART-END-->
<div class="a" style="left:739px;top:111.2px;width:5.8px;height:282.3px;background:#fff;"></div>
<div class="a" style="left:739px;top:111.2px;width:5.8px;height:10px;background:#f8f9fa;"></div>
<div class="a" style="left:739px;top:110.5px;width:0.7px;height:283px;background:#e0e2e5;"></div>
<div class="a" style="left:741px;top:122.7px;width:2.4px;height:23px;background:#dadce0;border-radius:1.2px"></div>
<div class="a" style="left:739.5px;top:376.8px;width:5px;height:5.8px;background:#f8f9fa;border:0.5px solid #dadce0"></div>
<div class="a" style="left:739.5px;top:382.8px;width:5px;height:5.8px;background:#f8f9fa;border:0.5px solid #dadce0"></div>
<svg style="left:741.2px;top:379px" width="1.8" height="1.3" viewBox="0 0 2 1.4"><path d="M0 1.4H2L1 0Z" fill="#777"/></svg>
<svg style="left:741.2px;top:385.2px" width="1.8" height="1.3" viewBox="0 0 2 1.4"><path d="M0 0H2L1 1.4Z" fill="#777"/></svg>
<div class="a" style="left:20px;top:388.9px;width:719px;height:4.5px;background:#fff;"></div>
<div class="a" style="left:726.7px;top:389px;width:6px;height:4.4px;background:#f8f9fa;border:0.5px solid #dadce0"></div>
<div class="a" style="left:732.8px;top:389px;width:6px;height:4.4px;background:#f8f9fa;border:0.5px solid #dadce0"></div>
<svg style="left:729px;top:390.4px" width="1.3" height="1.8" viewBox="0 0 1.4 2"><path d="M1.4 0V2L0 1Z" fill="#777"/></svg>
<svg style="left:735.2px;top:390.4px" width="1.3" height="1.8" viewBox="0 0 1.4 2"><path d="M0 0V2L1.4 1Z" fill="#777"/></svg>
<div class="a" style="left:744.8px;top:84px;width:23.2px;height:325.5px;background:#fff;"></div>
<div class="a" style="left:744.5px;top:84px;width:0.7px;height:325.5px;background:#e0e2e5;"></div>
<svg style="left:753.7px;top:94px" width="6.6" height="6.6" viewBox="0 0 6.6 6.6"><rect width="6.6" height="6.6" rx="0.7" fill="#4285f4"/><rect x="0.9" y="1.5" width="4.8" height="4.2" fill="#2f6fe0"/><text x="3.3" y="5.2" font-size="3.6" font-family="Liberation Sans, sans-serif" font-weight="bold" fill="#e8f0fe" text-anchor="middle">31</text></svg>
<svg style="left:753.7px;top:117.2px" width="6.6" height="6.8" viewBox="0 0 6.6 6.8"><path d="M0.7 0H5.9A0.7 0.7 0 0 1 6.6 0.7V4.8L4.6 6.8H0.7A0.7 0.7 0 0 1 0 6.1V0.7A0.7 0.7 0 0 1 0.7 0Z" fill="#fbbc04"/><circle cx="3.3" cy="2.8" r="1.3" fill="none" stroke="#fde293" stroke-width="0.6"/><rect x="2.7" y="4.3" width="1.2" height="0.8" fill="#fde293"/></svg>
<svg style="left:753.3px;top:140.3px" width="8" height="8" viewBox="0 0 8 8"><circle cx="4" cy="4" r="4" fill="#2a73e8"/><path d="M2 4.2L3.5 5.6L6.6 2.2" stroke="#fff" stroke-width="1.1" fill="none"/><circle cx="1.5" cy="3.6" r="0.6" fill="#fbbc04"/></svg>
<svg style="left:755.3px;top:395.6px" width="2.6" height="4.4" viewBox="0 0 3 5"><path d="M0.4 0.4L2.5 2.5L0.4 4.6" stroke="#666" stroke-width="0.8" fill="none"/></svg>
<div class="a" style="left:0px;top:393.5px;width:745px;height:16px;background:#f1f3f4;"></div>
<div class="a" style="left:0px;top:393.2px;width:745px;height:0.6px;background:#e3e5e8;"></div>
<svg style="left:20.5px;top:398.9px" width="5" height="5" viewBox="0 0 5 5"><path d="M2.5 0V5M0 2.5H5" stroke="#5f6368" stroke-width="0.8"/></svg>
<svg style="left:34.4px;top:398.79999999999995px" width="4.8" height="4.8" viewBox="0 0 4.8 4.8"><path d="M0 0.5H4.8M0 1.8H4.8M0 3.1H4.8M0 4.4H4.8" stroke="#5f6368" stroke-width="0.8"/></svg>
<div class="a" style="left:88.7px;top:394px;width:0.6px;height:15px;background:#e0e2e5;"></div>
<div class="a" style="left:49px;top:408px;width:40px;height:1.6px;background:#26c6da;"></div>
<div class="t" style="left:55.8px;top:398.25px;font-size:6.3px;color:#80868b;letter-spacing:-0.36px">REKAP</div>
<svg style="left:79.0px;top:400.79999999999995px" width="3.2" height="1.8" viewBox="0 0 3.2 1.8"><path d="M0 0H3.2L1.6 1.8Z" fill="#80868b"/></svg>
<div class="a" style="left:89px;top:392.6px;width:61.5px;height:16.9px;background:#fff;box-shadow:0 0 1.2px rgba(0,0,0,0.35)"></div>
<div class="a" style="left:89px;top:408px;width:61.5px;height:1.6px;background:#26c6da;"></div>
<div class="t" style="left:96px;top:398.25px;font-size:6.3px;color:#188038;letter-spacing:0.04px;font-weight:bold;letter-spacing:-0.35px">TABEL CHART</div>
<svg style="left:139.9px;top:400.79999999999995px" width="3.2" height="1.8" viewBox="0 0 3.2 1.8"><path d="M0 0H3.2L1.6 1.8Z" fill="#188038"/></svg>
<div class="a" style="left:205.7px;top:394px;width:0.6px;height:15px;background:#e0e2e5;"></div>
<div class="a" style="left:150.5px;top:408px;width:55.5px;height:1.6px;background:#109d48;"></div>
<div class="t" style="left:157.5px;top:398.25px;font-size:6.3px;color:#80868b;letter-spacing:0.04px">Rekapitulasi</div>
<svg style="left:196.1px;top:400.79999999999995px" width="3.2" height="1.8" viewBox="0 0 3.2 1.8"><path d="M0 0H3.2L1.6 1.8Z" fill="#80868b"/></svg>
<div class="a" style="left:251.39999999999998px;top:394px;width:0.6px;height:15px;background:#e0e2e5;"></div>
<div class="t" style="left:213px;top:398.25px;font-size:6.3px;color:#80868b;letter-spacing:0.04px">Sheet43</div>
<svg style="left:240.9px;top:400.79999999999995px" width="3.2" height="1.8" viewBox="0 0 3.2 1.8"><path d="M0 0H3.2L1.6 1.8Z" fill="#80868b"/></svg>
<div class="a" style="left:349.2px;top:394px;width:0.6px;height:15px;background:#e0e2e5;"></div>
<div class="a" style="left:251.7px;top:408px;width:97.80000000000001px;height:1.6px;background:#109d48;"></div>
<div class="t" style="left:258.5px;top:398.25px;font-size:6.3px;color:#80868b;letter-spacing:0.04px">Rekapitulasi Progress Fisik</div>
<svg style="left:338.9px;top:400.79999999999995px" width="3.2" height="1.8" viewBox="0 0 3.2 1.8"><path d="M0 0H3.2L1.6 1.8Z" fill="#80868b"/></svg>
<div class="a" style="left:418.2px;top:394px;width:0.6px;height:15px;background:#e0e2e5;"></div>
<div class="a" style="left:349.5px;top:408px;width:69.0px;height:1.6px;background:#e01b1b;"></div>
<div class="t" style="left:356px;top:398.25px;font-size:6.3px;color:#80868b;letter-spacing:0.04px">ProgressBulanan</div>
<svg style="left:408.4px;top:400.79999999999995px" width="3.2" height="1.8" viewBox="0 0 3.2 1.8"><path d="M0 0H3.2L1.6 1.8Z" fill="#80868b"/></svg>
<div class="a" style="left:495.7px;top:394px;width:0.6px;height:15px;background:#e0e2e5;"></div>
<div class="a" style="left:418.5px;top:408px;width:77.5px;height:1.6px;background:#e01b1b;"></div>
<div class="t" style="left:425.5px;top:398.25px;font-size:6.3px;color:#80868b;letter-spacing:0.04px">Kendali vs Defenitif</div>
<svg style="left:486.09999999999997px;top:400.79999999999995px" width="3.2" height="1.8" viewBox="0 0 3.2 1.8"><path d="M0 0H3.2L1.6 1.8Z" fill="#80868b"/></svg>
<div class="a" style="left:542.7px;top:394px;width:0.6px;height:15px;background:#e0e2e5;"></div>
<div class="t" style="left:503px;top:398.25px;font-size:6.3px;color:#80868b;letter-spacing:0.04px">Defenitif</div>
<svg style="left:532.9px;top:400.79999999999995px" width="3.2" height="1.8" viewBox="0 0 3.2 1.8"><path d="M0 0H3.2L1.6 1.8Z" fill="#80868b"/></svg>
<div class="a" style="left:573.7px;top:394px;width:0.6px;height:15px;background:#e0e2e5;"></div>
<div class="t" style="left:550px;top:398.25px;font-size:6.3px;color:#80868b;letter-spacing:0.04px">BTL</div>
<svg style="left:564.4px;top:400.79999999999995px" width="3.2" height="1.8" viewBox="0 0 3.2 1.8"><path d="M0 0H3.2L1.6 1.8Z" fill="#80868b"/></svg>
<div class="a" style="left:602.2px;top:394px;width:0.6px;height:15px;background:#e0e2e5;"></div>
<div class="t" style="left:581.7px;top:398.25px;font-size:6.3px;color:#80868b;letter-spacing:0.04px">01.01</div>
<svg style="left:599.9px;top:400.79999999999995px" width="3.2" height="1.8" viewBox="0 0 3.2 1.8"><path d="M0 0H3.2L1.6 1.8Z" fill="#80868b"/></svg>
<div class="a" style="left:602.2px;top:393.5px;width:0.8px;height:16px;background:#c8cacd;"></div>
<svg style="left:610.5px;top:399.59999999999997px" width="2.4" height="3.6" viewBox="0 0 2.4 3.6"><path d="M2.4 0V3.6L0 1.8Z" fill="#c4c7ca"/></svg>
<svg style="left:623.6px;top:399.59999999999997px" width="2.4" height="3.6" viewBox="0 0 2.4 3.6"><path d="M0 0V3.6L2.4 1.8Z" fill="#202124"/></svg>
<svg style="left:727.5px;top:396.2px" width="8" height="9" viewBox="0 0 8 9"><path d="M0.8 0H7.2A0.8 0.8 0 0 1 8 0.8V6.6A0.8 0.8 0 0 1 7.2 7.4H5.2L4 9L2.8 7.4H0.8A0.8 0.8 0 0 1 0 6.6V0.8A0.8 0.8 0 0 1 0.8 0Z" fill="#5f6368"/><path d="M4 1.6L4.6 3.1L6.1 3.7L4.6 4.3L4 5.8L3.4 4.3L1.9 3.7L3.4 3.1Z" fill="#fff"/></svg>
<!--TABS-END-->
<div class="a" style="left:0px;top:409.6px;width:768px;height:22.4px;background:#1b1b1b;"></div>
<div class="a" style="left:194.2px;top:409.6px;width:25px;height:22.4px;background:#3b3b3b;"></div>
<div class="a" style="left:31px;top:431px;width:22.299999999999997px;height:1px;background:#76b9ed;"></div>
<div class="a" style="left:194.2px;top:431px;width:25.0px;height:1px;background:#76b9ed;"></div>
<div class="a" style="left:361.3px;top:431px;width:22.69999999999999px;height:1px;background:#76b9ed;"></div>
<div class="a" style="left:471.7px;top:431px;width:22.30000000000001px;height:1px;background:#76b9ed;"></div>
<svg style="left:9px;top:415.79999999999995px" width="9.4" height="9.4" viewBox="0 0 9.4 9.4"><path d="M0 1.3L3.9 0.8V4.4H0ZM4.5 0.7L9.4 0V4.4H4.5ZM0 5H3.9V8.6L0 8.1ZM4.5 5H9.4V9.4L4.5 8.7Z" fill="#fff"/></svg>
<svg style="left:36px;top:415.2px" width="12" height="10.4" viewBox="0 0 12 10.4"><path d="M0 0.8A0.6 0.6 0 0 1 0.6 0.2H4.2L5.2 1.4H11.4A0.6 0.6 0 0 1 12 2V9.6H0Z" fill="#e9a820"/><rect x="0" y="2.6" width="12" height="7.4" rx="0.4" fill="#fbd25a"/><path d="M2.4 10V6.4H9.6V10H7.6V8.2H4.4V10Z" fill="#3a8fe0"/><rect x="0" y="9.6" width="12" height="0.8" fill="#d89a1c"/></svg>
<svg style="left:62.7px;top:413.4px" width="14" height="14" viewBox="0 0 14 14"><circle cx="7" cy="7" r="7" fill="#f2ece8"/><path d="M10.2 7A3.3 3.3 0 1 1 6.9 3.7C8.8 3.7 10.2 5.1 10.2 7V10.4" stroke="#e8402d" stroke-width="1.05" fill="none"/></svg>
<svg style="left:90.5px;top:414.0px" width="14" height="13" viewBox="0 0 14 13"><circle cx="8.6" cy="4.8" r="4.8" fill="#3d9be0"/><path d="M5.4 2.6C7 0.8 10.4 0.6 12.2 2.4C11 2.2 10.4 3.4 9 3C7.6 2.6 6.6 3.4 5.4 2.6Z" fill="#9ad0f5"/><rect x="0.6" y="4.6" width="7.4" height="5.6" fill="#1e78d2" transform="rotate(-8 4 7)"/><path d="M3.6 10.2L4 11.8M2.4 12.2L6 11.6" stroke="#9ab" stroke-width="0.7"/></svg>
<svg style="left:118.3px;top:413.79999999999995px" width="13.4" height="13.4" viewBox="0 0 13.4 13.4"><rect width="13.4" height="13.4" rx="1.6" fill="#f37a21"/><path d="M3.2 3.4C4.4 2.6 5.6 3.4 6.7 4.6C7.8 3.4 9 2.6 10.2 3.4C11.2 4.4 10.4 5.8 9.2 6.7C10.4 7.6 11.2 9 10.2 10C9 10.8 7.8 10 6.7 8.8C5.6 10 4.4 10.8 3.2 10C2.2 9 3 7.6 4.2 6.7C3 5.8 2.2 4.4 3.2 3.4Z" fill="none" stroke="#fff" stroke-width="1.5" stroke-linejoin="round"/></svg>
<svg style="left:146px;top:414.4px" width="12.6" height="12" viewBox="0 0 12.6 12"><path d="M0 1.4C2 0 4.6 0 6.3 1.2C8 0 10.6 0 12.6 1.4V9.6C10.6 8.6 8 8.6 6.3 9.8C4.6 8.6 2 8.6 0 9.6Z" fill="#f4f4f4"/><path d="M6.3 1.2V9.8" stroke="#333" stroke-width="0.6"/><path d="M3.4 3.2H9.2M3.8 3.2V6.6H8.8V3.2M3.8 4.9H8.8M5 6.6L4 8.2M7.6 6.6L8.6 8.2" stroke="#333" stroke-width="0.7" fill="none"/><path d="M1.4 11L3 10.6L4.4 11L6 10.6L7.6 11L9.2 10.6L10.8 11" stroke="#ddd" stroke-width="0.7" fill="none"/></svg>
<svg style="left:173.8px;top:413.79999999999995px" width="13.2" height="13.2" viewBox="0 0 13.2 13.2"><rect width="13.2" height="13.2" rx="1" fill="#2a3a47"/><path d="M4 8.6L8.4 4.2L10.2 6L5.8 10.4Z" fill="#4de0c8"/><path d="M3.6 3.2L6.2 3.4L4.2 5.4Z" fill="#4de0c8"/></svg>
<svg style="left:200.6px;top:413.79999999999995px" width="13.4" height="13.4" viewBox="0 0 13.4 13.4"><circle cx="6.7" cy="6.7" r="6.7" fill="#e3132c"/><ellipse cx="6.7" cy="6.7" rx="2.7" ry="4.6" fill="#3b3b3b"/></svg>
<svg style="left:228.6px;top:414.0px" width="13" height="13" viewBox="0 0 13 13"><path d="M9.4 0L13 1.6V11.2L9.4 13L3.4 7.6L1.2 9.4L0 8.8V4.2L1.2 3.6L3.4 5.4ZM9.4 3.8L5.8 6.5L9.4 9.2ZM1.2 5.2V7.8L2.6 6.5Z" fill="#1f8ad2" fill-rule="evenodd"/><path d="M0 9.6L9 11.2L9.4 13Z" fill="#1569b0"/></svg>
<svg style="left:255.8px;top:413.7px" width="13.4" height="13.4" viewBox="0 0 13.4 13.4"><circle cx="6.7" cy="6.7" r="6.7" fill="#3fb768"/><circle cx="6.7" cy="6.7" r="6.7" fill="url(#gg)"/><g fill="none" stroke="#d4f5df" stroke-width="0.6"><ellipse cx="6.7" cy="6.7" rx="4.6" ry="1.9"/><ellipse cx="6.7" cy="6.7" rx="4.6" ry="1.9" transform="rotate(60 6.7 6.7)"/><ellipse cx="6.7" cy="6.7" rx="4.6" ry="1.9" transform="rotate(120 6.7 6.7)"/></g><circle cx="6.7" cy="6.7" r="0.8" fill="#d4f5df"/></svg>
<svg style="left:283.2px;top:413.59999999999997px" width="13.6" height="13.8" viewBox="0 0 13.6 13.8"><path d="M6.9 0.2A6.5 6.5 0 0 1 6.9 13.2C5.7 13.2 4.6 12.9 3.7 12.4L0.3 13.5L1.4 10.2A6.5 6.5 0 0 1 6.9 0.2Z" fill="#f4f4f4"/><circle cx="6.9" cy="6.7" r="5.4" fill="#2fc24a"/><path d="M4.6 3.8C4.2 4.4 4 5.4 5 6.9C6 8.4 7.4 9.4 8.6 9.6C9.4 9.7 10 9.2 10.1 8.6L8.7 7.8L8 8.4C7.2 8.1 6.2 7.2 5.8 6.2L6.3 5.5L5.6 3.8Z" fill="#fff"/></svg>
<svg style="left:311px;top:413.79999999999995px" width="13.2" height="13.2" viewBox="0 0 13.2 13.2"><circle cx="6.6" cy="6.6" r="6.6" fill="#2a9fd8"/><path d="M2.6 6.5L10 3.5L8.8 9.9L6.6 8.3L5.4 9.5L5.2 7.5L8.6 4.8L4.4 7.2Z" fill="#fff"/></svg>
<svg style="left:338.5px;top:414.0px" width="14" height="13" viewBox="0 0 14 13"><rect x="3.4" y="0.4" width="10.2" height="12.2" rx="0.8" fill="#2b7cd3"/><rect x="3.4" y="0.4" width="10.2" height="4" rx="0.8" fill="#2b7cd3" opacity="0.7"/><rect x="3.4" y="8.6" width="10.2" height="4" fill="#185abd" opacity="0.55"/><rect x="0" y="3" width="7" height="7" rx="0.6" fill="#185abd"/><text x="3.5" y="8.6" font-size="5.6" font-weight="bold" font-family="Liberation Sans, sans-serif" fill="#fff" text-anchor="middle">W</text></svg>
<svg style="left:366.0px;top:414.0px" width="14" height="13" viewBox="0 0 14 13"><rect x="3.4" y="0.4" width="10.2" height="12.2" rx="0.8" fill="#21a366"/><rect x="3.4" y="0.4" width="10.2" height="4" rx="0.8" fill="#21a366" opacity="0.7"/><rect x="3.4" y="8.6" width="10.2" height="4" fill="#107c41" opacity="0.55"/><rect x="0" y="3" width="7" height="7" rx="0.6" fill="#107c41"/><text x="3.5" y="8.6" font-size="5.6" font-weight="bold" font-family="Liberation Sans, sans-serif" fill="#fff" text-anchor="middle">X</text></svg>
<svg style="left:393.5px;top:414.0px" width="14" height="13" viewBox="0 0 14 13"><circle cx="8" cy="6.5" r="6" fill="#ed6c47"/><path d="M8 0.5A6 6 0 0 1 14 6.5H8Z" fill="#f5a183"/><rect x="0" y="3" width="7" height="7" rx="0.6" fill="#c43e1c"/><text x="3.5" y="8.6" font-size="5.6" font-weight="bold" font-family="Liberation Sans, sans-serif" fill="#fff" text-anchor="middle">P</text></svg>
<svg style="left:421.0px;top:414.0px" width="14" height="13" viewBox="0 0 14 13"><rect x="3.4" y="0.4" width="10.2" height="12.2" rx="0.8" fill="#c9304a"/><rect x="3.4" y="0.4" width="10.2" height="4" rx="0.8" fill="#c9304a" opacity="0.7"/><rect x="3.4" y="8.6" width="10.2" height="4" fill="#a4262c" opacity="0.55"/><rect x="0" y="3" width="7" height="7" rx="0.6" fill="#a4262c"/><text x="3.5" y="8.6" font-size="5.6" font-weight="bold" font-family="Liberation Sans, sans-serif" fill="#fff" text-anchor="middle">A</text></svg>
<svg style="left:448px;top:413.4px" width="13.4" height="14" viewBox="0 0 13.4 14"><path d="M6.7 0.4L13 3.4V10.4L6.7 13.6L0.4 10.4V3.4Z" fill="#1d3a6e" stroke="#c9d6ea" stroke-width="0.8" stroke-linejoin="round"/><path d="M0.4 3.4L6.7 6.6L13 3.4M6.7 6.6V13.6" stroke="#c9d6ea" stroke-width="0.8" fill="none"/><path d="M6.7 0.4L13 3.4L6.7 6.6L0.4 3.4Z" fill="#e6edf7"/></svg>
<svg style="left:476px;top:412.79999999999995px" width="13.6" height="15" viewBox="0 0 13.6 15"><path d="M6.2 3.6C10.2 3.2 13 5.6 12.4 8.6C12 10.6 9.8 10 9 11C8.4 11.8 9 12.8 7.6 13C3.8 13.4 0.4 11.4 0.4 8.4C0.4 5.8 3 3.9 6.2 3.6Z" fill="#cfe3f3" stroke="#8fb3d1" stroke-width="0.5"/><circle cx="3.2" cy="8" r="1" fill="#e0483c"/><circle cx="5.2" cy="5.8" r="1" fill="#f2c230"/><circle cx="8" cy="5.6" r="1" fill="#4caf50"/><circle cx="4" cy="10.6" r="1" fill="#3d7fd6"/><path d="M12.4 0.6L6.8 13.6" stroke="#d9892b" stroke-width="1.3" stroke-linecap="round"/><path d="M12.7 0.2L11.8 2.4" stroke="#555" stroke-width="1.4" stroke-linecap="round"/></svg>
<svg style="left:613.6px;top:418.79999999999995px" width="7" height="4" viewBox="0 0 7 4"><path d="M0.4 3.6L3.5 0.5L6.6 3.6" stroke="#fff" stroke-width="0.9" fill="none"/></svg>
<svg style="left:626.6px;top:417.79999999999995px" width="9.6" height="5.6" viewBox="0 0 9.6 5.6"><rect x="0.4" y="0.4" width="8" height="4.8" rx="0.6" stroke="#fff" stroke-width="0.8" fill="none"/><rect x="1.4" y="1.4" width="4.6" height="2.8" fill="#fff"/><rect x="8.7" y="1.8" width="0.9" height="2" fill="#fff"/></svg>
<svg style="left:640.6px;top:416.59999999999997px" width="9.4" height="8" viewBox="0 0 9.4 8"><rect x="2.6" y="0.4" width="6.4" height="4.6" stroke="#fff" stroke-width="0.8" fill="none"/><path d="M5.8 5V7M3.8 7.4H7.8" stroke="#fff" stroke-width="0.8"/><rect x="0.3" y="0.4" width="1.6" height="6.8" stroke="#fff" stroke-width="0.6" fill="#1b1b1b"/></svg>
<svg style="left:654px;top:417.0px" width="9" height="7" viewBox="0 0 9 7"><path d="M0.4 2.4H1.8L3.8 0.5V6.5L1.8 4.6H0.4Z" stroke="#fff" stroke-width="0.7" fill="none"/><path d="M5 2.2C5.6 3 5.6 4 5 4.8M6.2 1.2C7.4 2.6 7.4 4.4 6.2 5.8M7.6 0.4C9.2 2.4 9.2 4.6 7.6 6.6" stroke="#bbb" stroke-width="0.6" fill="none"/></svg>
<svg style="left:667.6px;top:416.4px" width="9.4" height="8.6" viewBox="0 0 9.4 8.6"><path d="M2.35 0L4.7 1.5L2.35 3L0 1.5ZM7.05 0L9.4 1.5L7.05 3L4.7 1.5ZM2.35 3L4.7 4.5L2.35 6L0 4.5ZM7.05 3L9.4 4.5L7.05 6L4.7 4.5ZM4.7 5.4L7 6.8L4.7 8.4L2.4 6.8Z" fill="#fff"/></svg>
<div class="t" style="left:683px;top:417.45px;font-size:6.5px;color:#fff;letter-spacing:-0.15px">IND</div>
<div class="t" style="left:718.3px;top:413.15px;font-size:6.5px;color:#fff;transform:translateX(-50%);letter-spacing:-0.1px">14.22</div>
<div class="t" style="left:718.3px;top:422.95px;font-size:6.5px;color:#fff;transform:translateX(-50%);letter-spacing:-0.1px">30/07/2019</div>
<svg style="left:744.8px;top:416.2px" width="12.6" height="12" viewBox="0 0 12.6 12"><path d="M0.3 0.3H9.3V6.6H3.6L1.8 8.4V6.6H0.3Z" fill="#f2f2f2"/><path d="M1.8 2.2H7.8M1.8 4H7.8" stroke="#1b1b1b" stroke-width="0.7"/><circle cx="9" cy="8.5" r="3.3" fill="#1b1b1b" stroke="#e8e8e8" stroke-width="0.6"/><text x="9" y="10.3" font-size="4.8" font-family="Liberation Sans, sans-serif" fill="#fff" text-anchor="middle">3</text></svg>
<div class="a" style="left:765px;top:409.6px;width:0.6px;height:22.4px;background:#555;"></div>
<!--TASKBAR-END-->
</body></html>
